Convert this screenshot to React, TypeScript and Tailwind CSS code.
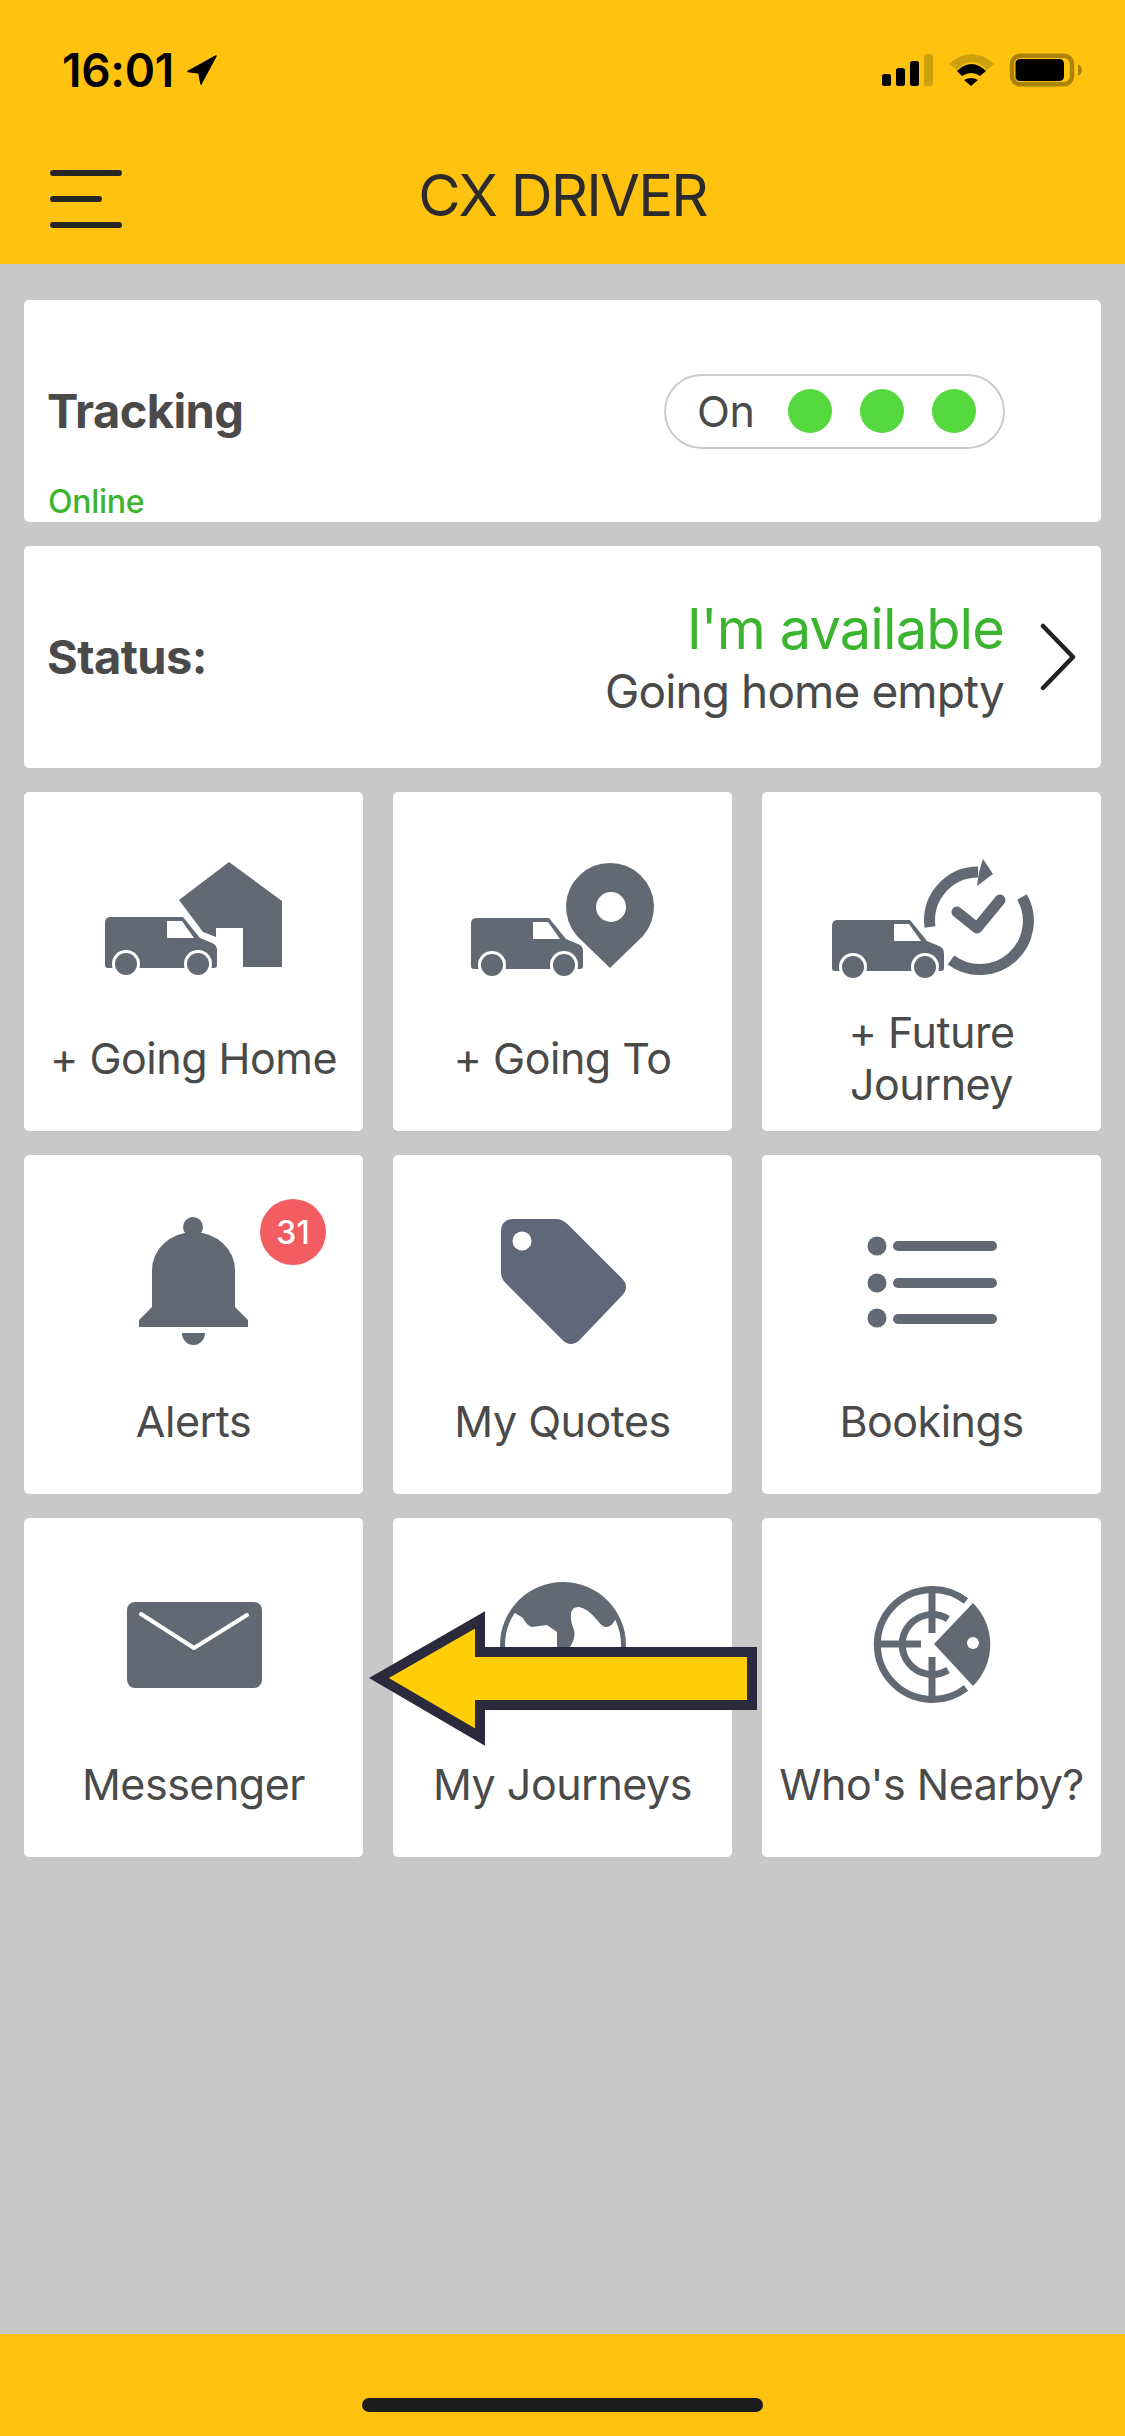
import React from "react";

const G = "#616a74";

function Van({ x, y }: { x: number; y: number }) {
  return (
    <g transform={`translate(${x} ${y})`}>
      <path d="M5 0H78L95 21L107 26Q112 28 112 33V48Q112 51 109 51H3Q0 51 0 48V6Q0 0 5 0Z" fill={G} />
      <path d="M62 4H77L89 21H62Z" fill="#fff" />
      <circle cx="21" cy="47" r="14" fill="#fff" />
      <circle cx="93" cy="47" r="14" fill="#fff" />
      <rect x="0" y="51" width="112" height="12" fill="#fff" />
      <circle cx="21" cy="47" r="11" fill={G} />
      <circle cx="93" cy="47" r="11" fill={G} />
    </g>
  );
}

function Icon({ children }: { children: React.ReactNode }) {
  return (
    <svg className="block w-[339px] h-[215px]" viewBox="0 0 339 215">
      {children}
    </svg>
  );
}

function Tile({ label, icon, badge }: { label: React.ReactNode; icon: React.ReactNode; badge?: string }) {
  return (
    <div className="relative w-[339px] h-[339px] bg-white rounded-[5px] flex flex-col">
      <Icon>{icon}</Icon>
      <div className="h-[102px] flex items-center justify-center text-center text-[43px] leading-[52px] tracking-[-0.5px] text-[#4a4a4a]">
        {label}
      </div>
      {badge && (
        <div className="absolute left-[236px] top-[44px] w-[66px] h-[66px] rounded-full bg-[#f35d62] text-white text-[32px] font-medium pt-[1px] flex items-center justify-center">
          {badge}
        </div>
      )}
    </div>
  );
}

export default function App() {
  return (
    <div
      className="relative w-[1125px] h-[2436px] bg-[#c8c8c8] flex flex-col overflow-hidden"
      style={{ fontFamily: "Inter, 'Liberation Sans', sans-serif" }}
    >
      <header className="h-[264px] bg-[#ffc20e] flex flex-col">
        <div className="h-[140px] pl-[62px] pr-[43px] flex items-center justify-between">
          <div className="flex items-center gap-[13px] text-black">
            <span className="text-[46px] font-semibold tracking-[-0.3px] leading-none">16:01</span>
            <svg width="30" height="30" viewBox="0 0 30 30">
              <path d="M29 1L1 16.5L12 18L14 29Z" fill="#000" stroke="#000" strokeWidth="1.5" strokeLinejoin="round" />
            </svg>
          </div>
          <svg width="201" height="35" viewBox="0 0 201 35">
            <rect x="1" y="21" width="9" height="12" rx="2.5" fill="#000" />
            <rect x="15" y="15" width="9" height="18" rx="2.5" fill="#000" />
            <rect x="29" y="8" width="9" height="25" rx="2.5" fill="#000" />
            <rect x="43" y="1" width="9" height="32" rx="2.5" fill="#cda10b" />
            <path d="M68 11Q91 -9 113 11L106 17Q91 1 76 17Z" fill="#cda10b" />
            <path d="M76 18Q90.5 4 105 18L99 23Q90.5 17 81 23Z" fill="#000" />
            <path d="M83 27Q90 23 97 27L90 33Z" fill="#000" />
            <rect x="131" y="2.7" width="60" height="28.6" rx="8" fill="none" stroke="#ab8308" strokeWidth="4.5" />
            <rect x="134.5" y="6" width="48.5" height="22" rx="4.5" fill="#000" />
            <path d="M197 11Q201 13 201 17Q201 21 197 23Z" fill="#ab8308" />
          </svg>
        </div>
        <div className="relative h-[124px] flex items-start justify-center pt-[20px]">
          <div className="absolute left-[50px] top-[30px] flex flex-col gap-[20px]">
            <div className="w-[72px] h-[6px] rounded-full bg-[#262626]" />
            <div className="w-[52px] h-[6px] rounded-full bg-[#262626]" />
            <div className="w-[72px] h-[6px] rounded-full bg-[#262626]" />
          </div>
          <h1 className="text-[58px] leading-[70px] font-normal tracking-[-1.8px] text-[#2b2b2b]">CX DRIVER</h1>
        </div>
      </header>

      <main className="flex-1 px-[24px] pt-[36px] flex flex-col gap-[24px]">
        <section className="relative h-[222px] bg-white rounded-[5px] px-[24px]">
          <div className="h-[222px] flex items-center justify-between pr-[72px]">
            <span className="text-[47px] font-bold tracking-[-0.6px] -ml-[1px] text-[#4a4a4a]">Tracking</span>
            <div className="w-[341px] h-[75px] rounded-full border-2 border-[#cbcbce] flex items-center pl-[31px]">
              <span className="text-[43px] text-[#4a4a4a] w-[91px] tracking-[-0.4px]">On</span>
              <div className="flex gap-[28px]">
                <div className="w-[44px] h-[44px] rounded-full bg-[#55d83d]" />
                <div className="w-[44px] h-[44px] rounded-full bg-[#55d83d]" />
                <div className="w-[44px] h-[44px] rounded-full bg-[#55d83d]" />
              </div>
            </div>
          </div>
          <span className="absolute left-[24px] bottom-[0px] text-[32px] leading-[40px] font-medium text-[#3bb52f] tracking-[-0.3px]">Online</span>
        </section>

        <section className="h-[222px] bg-white rounded-[5px] px-[24px] flex items-center justify-between">
          <span className="text-[47px] font-bold tracking-[-0.6px] -ml-[1px] text-[#4a4a4a]">Status:</span>
          <div className="flex items-center">
            <div className="flex flex-col items-end pr-[36px]">
              <span className="text-[56px] leading-[68px] tracking-[-0.9px] text-[#3bb52f]">I'm available</span>
              <span className="text-[46px] leading-[57px] tracking-[-0.9px] text-[#4a4a4a]">Going home empty</span>
            </div>
            <svg width="36" height="68" viewBox="0 0 36 68" className="mr-[1px]">
              <path d="M3 3L33 34L3 65" fill="none" stroke="#222" strokeWidth="4.5" strokeLinecap="round" strokeLinejoin="round" />
            </svg>
          </div>
        </section>

        <section className="grid grid-cols-[339px_339px_339px] auto-rows-[339px] gap-x-[30px] gap-y-[24px]">
          <Tile
            label="+ Going Home"
            icon={
              <>
                <path d="M205 70L258 109V175H219V136H192V145L179 140L155 108Z" fill={G} />
                <Van x={81} y={125} />
              </>
            }
          />
          <Tile
            label="+ Going To"
            icon={
              <>
                <path d="M217 176L184 144A44 44 0 1 1 250 144Z" fill={G} />
                <circle cx="218" cy="115" r="15" fill="#fff" />
                <Van x={78} y={126} />
              </>
            }
          />
          <Tile
            label={
              <span>
                + Future
                <br />
                Journey
              </span>
            }
            icon={
              <>
                <path d="M168 135A48.5 48.5 0 0 1 216 80" fill="none" stroke={G} strokeWidth="11" />
                <path d="M221 67L231 82L215 94L217 80Z" fill={G} />
                <path d="M260 105A48.5 48.5 0 0 1 189 168" fill="none" stroke={G} strokeWidth="11" />
                <path d="M195 120L215 136L238 108" fill="none" stroke={G} strokeWidth="11" strokeLinecap="round" strokeLinejoin="round" />
                <Van x={70} y={128} />
              </>
            }
          />

          <Tile
            label="Alerts"
            badge="31"
            icon={
              <>
                <circle cx="169" cy="72" r="10" fill={G} />
                <path d="M128 115A41.5 38 0 0 1 211 115V152L224 165V172H115V165L128 152Z" fill={G} />
                <path d="M158 178H181A11.5 12 0 0 1 158 178Z" fill={G} />
              </>
            }
          />
          <Tile
            label="My Quotes"
            icon={
              <>
                <path
                  d="M120 70H163Q167 70 171 74L225 128Q229 132 225 136L182 181Q178 185 174 181L117 124Q114 121 114 117V76Q114 70 120 70Z"
                  fill="#5f6878"
                  stroke="#5f6878"
                  strokeWidth="12"
                  strokeLinejoin="round"
                />
                <circle cx="129" cy="86" r="9.5" fill="#fff" />
              </>
            }
          />
          <Tile
            label="Bookings"
            icon={
              <>
                <circle cx="115" cy="91" r="9.5" fill={G} />
                <circle cx="115" cy="128" r="9.5" fill={G} />
                <circle cx="115" cy="163" r="9.5" fill={G} />
                <rect x="131" y="86" width="104" height="10" rx="5" fill={G} />
                <rect x="131" y="123" width="104" height="10" rx="5" fill={G} />
                <rect x="131" y="159" width="104" height="10" rx="5" fill={G} />
              </>
            }
          />

          <Tile
            label="Messenger"
            icon={
              <>
                <rect x="103" y="84" width="135" height="86" rx="8" fill={G} />
                <path d="M117 96L170 130L223 97" fill="none" stroke="#fff" strokeWidth="4" strokeLinecap="round" strokeLinejoin="round" />
              </>
            }
          />
          <Tile
            label="My Journeys"
            icon={
              <>
                <clipPath id="globe-inner">
                  <circle cx="170" cy="127" r="58" />
                </clipPath>
                <circle cx="170" cy="127" r="63" fill={G} />
                <g clipPath="url(#globe-inner)" fill="#fff">
                  <path d="M122 95L130 100Q134 108 139 109L154 107L164 114V150H100V90Z" />
                  <path d="M177 140V129Q183 120 181 112Q177 102 178 95Q180 88 186 89Q194 90 204 102Q210 110 214 109Q219 108 222 102L240 95V140Z" />
                </g>
              </>
            }
          />
          <Tile
            label="Who's Nearby?"
            icon={
              <>
                <g fill="none" stroke={G} strokeWidth="7">
                  <path d="M204 83A55 55 0 1 0 204 170" />
                  <path d="M186 101A30 30 0 1 0 186 152" />
                  <path d="M170 75V115M170 139V178M118 126H159" />
                </g>
                <path d="M172 126L211 85A58.5 58.5 0 0 1 211 168Z" fill={G} />
                <circle cx="211" cy="125" r="6" fill="#fff" />
              </>
            }
          />
        </section>
      </main>

      <footer className="h-[102px] bg-[#ffc20e] flex justify-center pt-[64px]">
        <div className="w-[401px] h-[14px] rounded-full bg-[#1c1c1c]" />
      </footer>

      <svg className="absolute left-[360px] top-[1600px]" width="405" height="155" viewBox="0 0 405 155">
        <path d="M120 20V52H392V105H120V137L19 78Z" fill="#ffce06" stroke="#2a2a3c" strokeWidth="10" />
      </svg>
    </div>
  );
}
